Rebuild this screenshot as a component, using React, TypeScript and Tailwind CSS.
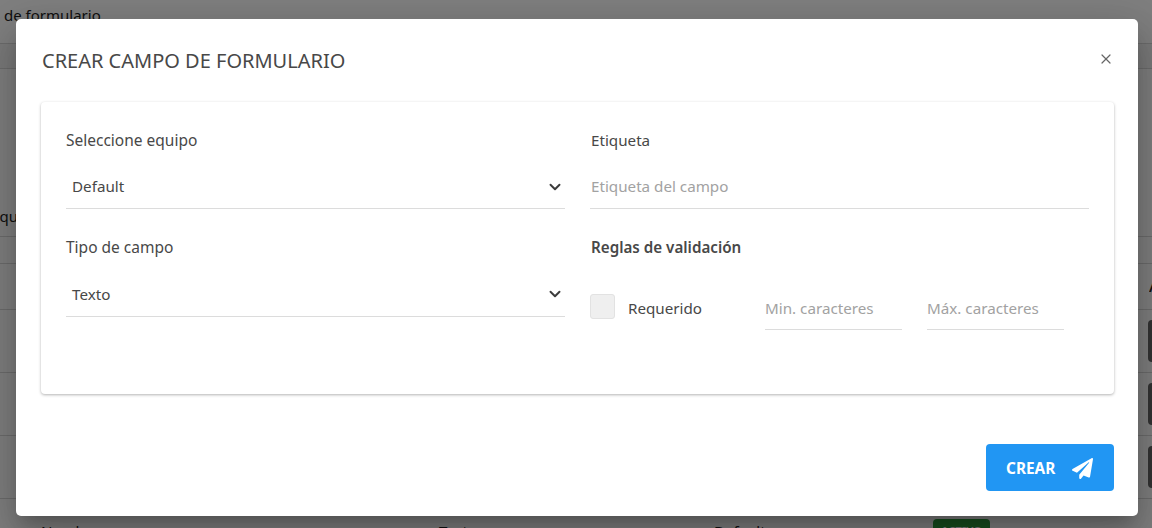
import React from 'react';
import { ChevronDown, X } from 'lucide-react';
import { FaPaperPlane } from 'react-icons/fa';

function Row({ className, children }: { className: string; children?: React.ReactNode }) {
  return <div className={`border-b border-[#d8d8d8] ${className}`}>{children}</div>;
}

function Background() {
  return (
    <div className="h-[528px] overflow-hidden bg-white text-[#222] text-[15px]">
      <Row className="h-[44px] pt-[4px] pl-[4px]">de formulario</Row>
      <Row className="h-[25px] bg-[#f5f5f5]" />
      <div className="h-[135px]" />
      <Row className="h-[33px] -ml-[9px] leading-[24px]">equ</Row>
      <Row className="h-[27px]" />
      <Row className="h-[46px] flex justify-end items-center">
        <span className="w-[3px] overflow-hidden font-semibold">A</span>
      </Row>
      {[0, 1, 2].map(i => (
        <Row key={i} className="h-[63px] flex justify-end items-center">
          <span className="w-[4px] h-[42px] bg-[#666] rounded-l" />
        </Row>
      ))}
      <div className="flex pt-[24px] leading-[16px]">
        <span className="ml-[41px] w-[398px]">Nombre</span>
        <span className="w-[275px]">Texto</span>
        <span className="w-[219px]">Default</span>
        <span className="w-[57px] h-[24px] -mt-[4px] bg-[#2e9e3e] rounded-sm text-white text-[11px] font-bold text-center pt-[4px]">ACTIVO</span>
      </div>
    </div>
  );
}

function SelectField({ label, value, boxClass }: { label: string; value: string; boxClass: string }) {
  return (
    <div>
      <p className="h-[20px] text-[15.5px] leading-[21px] text-[#484848]">{label}</p>
      <div className={`${boxClass} h-[43px] border-b border-[#dcdcdc] flex items-center justify-between pl-[6px] pr-[1px]`}>
        <span className="text-[15.2px] text-[#484848]">{value}</span>
        <ChevronDown size={18} strokeWidth={2.6} className="text-[#3c3c3c]" />
      </div>
    </div>
  );
}

export default function App() {
  return (
    <div className="relative h-[528px] overflow-hidden font-['Noto_Sans','Open_Sans',sans-serif]">
      <Background />
      <div className="absolute inset-0 bg-black/50 pt-[19px] pl-[16px]">
        <div className="relative w-[1122px] h-[497px] bg-white rounded-[5px] shadow-[0_11px_15px_-7px_rgba(0,0,0,0.2),0_24px_38px_3px_rgba(0,0,0,0.14),0_9px_46px_8px_rgba(0,0,0,0.12)] pl-[25px] pr-[24px] flex flex-col">
          <div className="h-[83px] flex items-start justify-between">
            <h2 className="mt-[29px] pl-[1px] text-[20px] leading-[26px] text-[#484848]">CREAR CAMPO DE FORMULARIO</h2>
            <X size={16} strokeWidth={1.8} className="mt-[32px] text-[#666]" />
          </div>

          <div className="h-[292px] rounded-[4px] bg-white shadow-[0_1px_3px_rgba(0,0,0,0.3)] px-[25px] pt-[28px] grid grid-cols-[499px_499px] gap-x-[25px] content-start">
            <div className="flex flex-col gap-[28px]">
              <SelectField label="Seleccione equipo" value="Default" boxClass="mt-[16px] pb-[1px]" />
              <SelectField label="Tipo de campo" value="Texto" boxClass="mt-[17px] pb-[2px]" />
            </div>
            <div>
              <p className="h-[20px] text-[15.2px] leading-[21px] text-[#484848] pl-[1px]">Etiqueta</p>
              <div className="mt-[16px] h-[43px] border-b border-[#dcdcdc] pl-[1px] pb-[1px] flex items-center">
                <span className="text-[15.2px] text-[#a2a2a2]">Etiqueta del campo</span>
              </div>
              <p className="mt-[28px] h-[20px] text-[15.2px] leading-[21px] font-semibold text-[#484848] pl-[1px]">Reglas de validación</p>
              <div className="mt-[34px] flex items-start">
                <span className="w-[25px] h-[25px] mt-[3px] rounded-[3px] bg-[#efefef] border border-[#e2e2e2]" />
                <span className="ml-[13px] mt-[7px] w-[137px] text-[15.2px] leading-[20px] text-[#484848]">Requerido</span>
                <div className="w-[137px] h-[39px] border-b border-[#dcdcdc] pt-[7px] text-[15.2px] leading-[20px] text-[#a2a2a2]">Min. caracteres</div>
                <div className="ml-[25px] w-[137px] h-[39px] border-b border-[#dcdcdc] pt-[7px] text-[15.2px] leading-[20px] text-[#a2a2a2]">Máx. caracteres</div>
              </div>
            </div>
          </div>

          <div className="flex justify-end mt-[50px]">
            <button className="w-[128px] h-[47px] bg-[#2196f3] rounded-[4px] text-white text-[15.4px] font-bold flex items-center pl-[20px] gap-[17px]">
              <span className="mt-[2px]">CREAR</span>
              <FaPaperPlane size={21} className="mt-[2px]" />
            </button>
          </div>
        </div>
      </div>
    </div>
  );
}
